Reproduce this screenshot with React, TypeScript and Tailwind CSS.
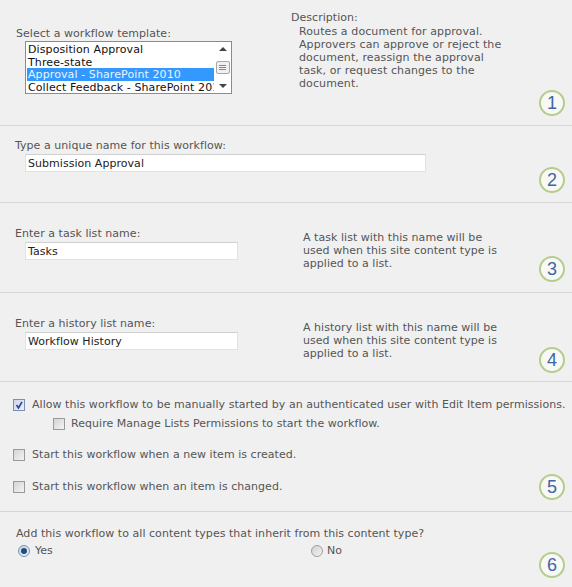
const font = "font-['DejaVu_Sans',sans-serif] text-[11px] leading-[13px] tracking-[0.04px]";

function Badge({ n, bottom }: { n: number; bottom: string }) {
    return (
        <span className={`absolute right-[7px] flex h-[26px] w-[26px] items-center justify-center rounded-full border-2 border-[#b4cd8e] bg-[#f8f8f4] font-['Liberation_Sans',sans-serif] text-[18px] leading-none text-[#3f65a8] ${bottom}`}>
            {n}
        </span>
    );
}

function Section({ height, n, bottom, children }: { height: string; n: number; bottom: string; children: React.ReactNode }) {
    return (
        <section className={`relative border-b border-[#d6d6d6] ${height}`}>
            {children}
            <Badge n={n} bottom={bottom} />
        </section>
    );
}

function TextBox({ value, width }: { value: string; width: string }) {
    return (
        <div className={`flex h-[18px] items-center border border-[#e2e2e2] border-t-[#d0d0d0] bg-white pl-[2px] text-[#222] ${width}`}>
            {value}
        </div>
    );
}

function Check({ checked }: { checked?: boolean }) {
    return (
        <span className={`flex h-[12px] w-[12px] shrink-0 items-center justify-center border bg-gradient-to-br ${checked ? "border-[#7f8db0] from-[#cfd6ea] to-[#eef0f8]" : "border-[#9a9a9a] from-[#d4d4d4] to-[#f4f4f4]"}`}>
            {checked && (
                <svg width="10" height="10" viewBox="0 0 10 10">
                    <path d="M2.5 5 L4.5 8 L8 1.8" fill="none" stroke="#2b45a0" strokeWidth="1.7" />
                </svg>
            )}
        </span>
    );
}

function Radio({ checked }: { checked?: boolean }) {
    return (
        <span className={`flex h-[12px] w-[12px] shrink-0 items-center justify-center rounded-full border bg-gradient-to-br ${checked ? "border-[#7d93ad] from-[#c4d4e4] to-[#eef3f8]" : "border-[#a0a0a0] from-[#d0d0d0] to-[#f4f4f4]"}`}>
            {checked && <span className="h-[6px] w-[6px] rounded-full bg-[#1f4f7c]" />}
        </span>
    );
}

function ListBox() {
    const items = ["Disposition Approval", "Three-state", "Approval - SharePoint 2010", "Collect Feedback - SharePoint 2010"];
    return (
        <div className="mt-px ml-[9px] flex h-[53px] w-[207px] border border-[#8c8c8c] bg-white text-[#111]">
            <div className="min-w-0 flex-1 overflow-hidden pl-[1px] pt-px tracking-[0.1px]">
                {items.map((item, i) => (
                    <div
                        key={item}
                        className={`h-[12.7px] whitespace-nowrap pl-[1px] ${i === 2 ? "bg-[#3399ff] text-[#e8f4ff]" : ""}`}
                    >
                        {item}
                    </div>
                ))}
            </div>
            <div className="flex w-[17px] flex-col items-center justify-between py-[5px]">
                <span className="h-0 w-0 border-x-[4px] border-b-[4px] border-x-transparent border-b-[#444]" />
                <span className="flex h-[13px] w-[14px] flex-col items-center justify-center gap-px rounded-[2px] border border-[#a8a8a8] bg-[#f0f0f0]">
                    <span className="h-px w-[7px] bg-[#888]" />
                    <span className="h-px w-[7px] bg-[#888]" />
                    <span className="h-px w-[7px] bg-[#888]" />
                </span>
                <span className="h-0 w-0 border-x-[4px] border-t-[4px] border-x-transparent border-t-[#444]" />
            </div>
        </div>
    );
}

function NameRow({ label, value, lines }: { label: string; value: string; lines: string[] }) {
    return (
        <div className="flex pt-[24px]">
            <div className="w-[303px] pl-[15px]">
                <p className="text-[#555]">{label}</p>
                <div className="mt-[2px] ml-[10px]">
                    <TextBox value={value} width="w-[213px]" />
                </div>
            </div>
            <div className="pt-[4px] text-[#555]">
                {lines.map((l) => (
                    <p key={l}>{l}</p>
                ))}
            </div>
        </div>
    );
}

export default function App() {
    return (
        <div className={`h-[587px] w-[572px] overflow-hidden bg-[#f0f0f0] ${font}`}>
            <Section height="h-[126px]" n={1} bottom="bottom-[9px]">
                <div className="flex">
                    <div className="w-[291px] pt-[27px] pl-[16px]">
                        <p className="text-[#555]">Select a workflow template:</p>
                        <ListBox />
                    </div>
                    <div className="pt-[11px] text-[#555]">
                        <p>Description:</p>
                        <div className="ml-[8px] mt-px tracking-[0.1px]">
                            <p>Routes a document for approval.</p>
                            <p>Approvers can approve or reject the</p>
                            <p>document, reassign the approval</p>
                            <p>task, or request changes to the</p>
                            <p>document.</p>
                        </div>
                    </div>
                </div>
            </Section>
            <Section height="h-[77px]" n={2} bottom="bottom-[9px]">
                <div className="pt-[13px] pl-[15px]">
                    <p className="text-[#555]">Type a unique name for this workflow:</p>
                    <div className="mt-[2px] ml-[10px]">
                        <TextBox value="Submission Approval" width="w-[401px]" />
                    </div>
                </div>
            </Section>
            <Section height="h-[90px]" n={3} bottom="bottom-[10px]">
                <NameRow
                    label="Enter a task list name:"
                    value="Tasks"
                    lines={["A task list with this name will be", "used when this site content type is", "applied to a list."]}
                />
            </Section>
            <Section height="h-[89px]" n={4} bottom="bottom-[8px]">
                <NameRow
                    label="Enter a history list name:"
                    value="Workflow History"
                    lines={["A history list with this name will be", "used when this site content type is", "applied to a list."]}
                />
            </Section>
            <Section height="h-[130px]" n={5} bottom="bottom-[11px]">
                <div className="flex flex-col pt-[16px] pl-[13px] text-[#555]">
                    <label className="flex items-center gap-[7px] whitespace-nowrap">
                        <Check checked />
                        Allow this workflow to be manually started by an authenticated user with Edit Item permissions.
                    </label>
                    <label className="mt-[6px] ml-[40px] flex items-center gap-[6px]">
                        <Check />
                        Require Manage Lists Permissions to start the workflow.
                    </label>
                    <label className="mt-[18px] flex items-center gap-[7px]">
                        <Check />
                        Start this workflow when a new item is created.
                    </label>
                    <label className="mt-[19px] flex items-center gap-[7px]">
                        <Check />
                        Start this workflow when an item is changed.
                    </label>
                </div>
            </Section>
            <section className="relative h-[75px]">
                <div className="pt-[15px] pl-[16px] text-[#555]">
                    <p>Add this workflow to all content types that inherit from this content type?</p>
                    <div className="mt-[4px] flex">
                        <label className="flex w-[295px] items-center gap-[5px] pl-[2px]">
                            <Radio checked />
                            Yes
                        </label>
                        <label className="flex items-center gap-[4px]">
                            <Radio />
                            No
                        </label>
                    </div>
                </div>
                <Badge n={6} bottom="bottom-[9px]" />
            </section>
        </div>
    );
}
